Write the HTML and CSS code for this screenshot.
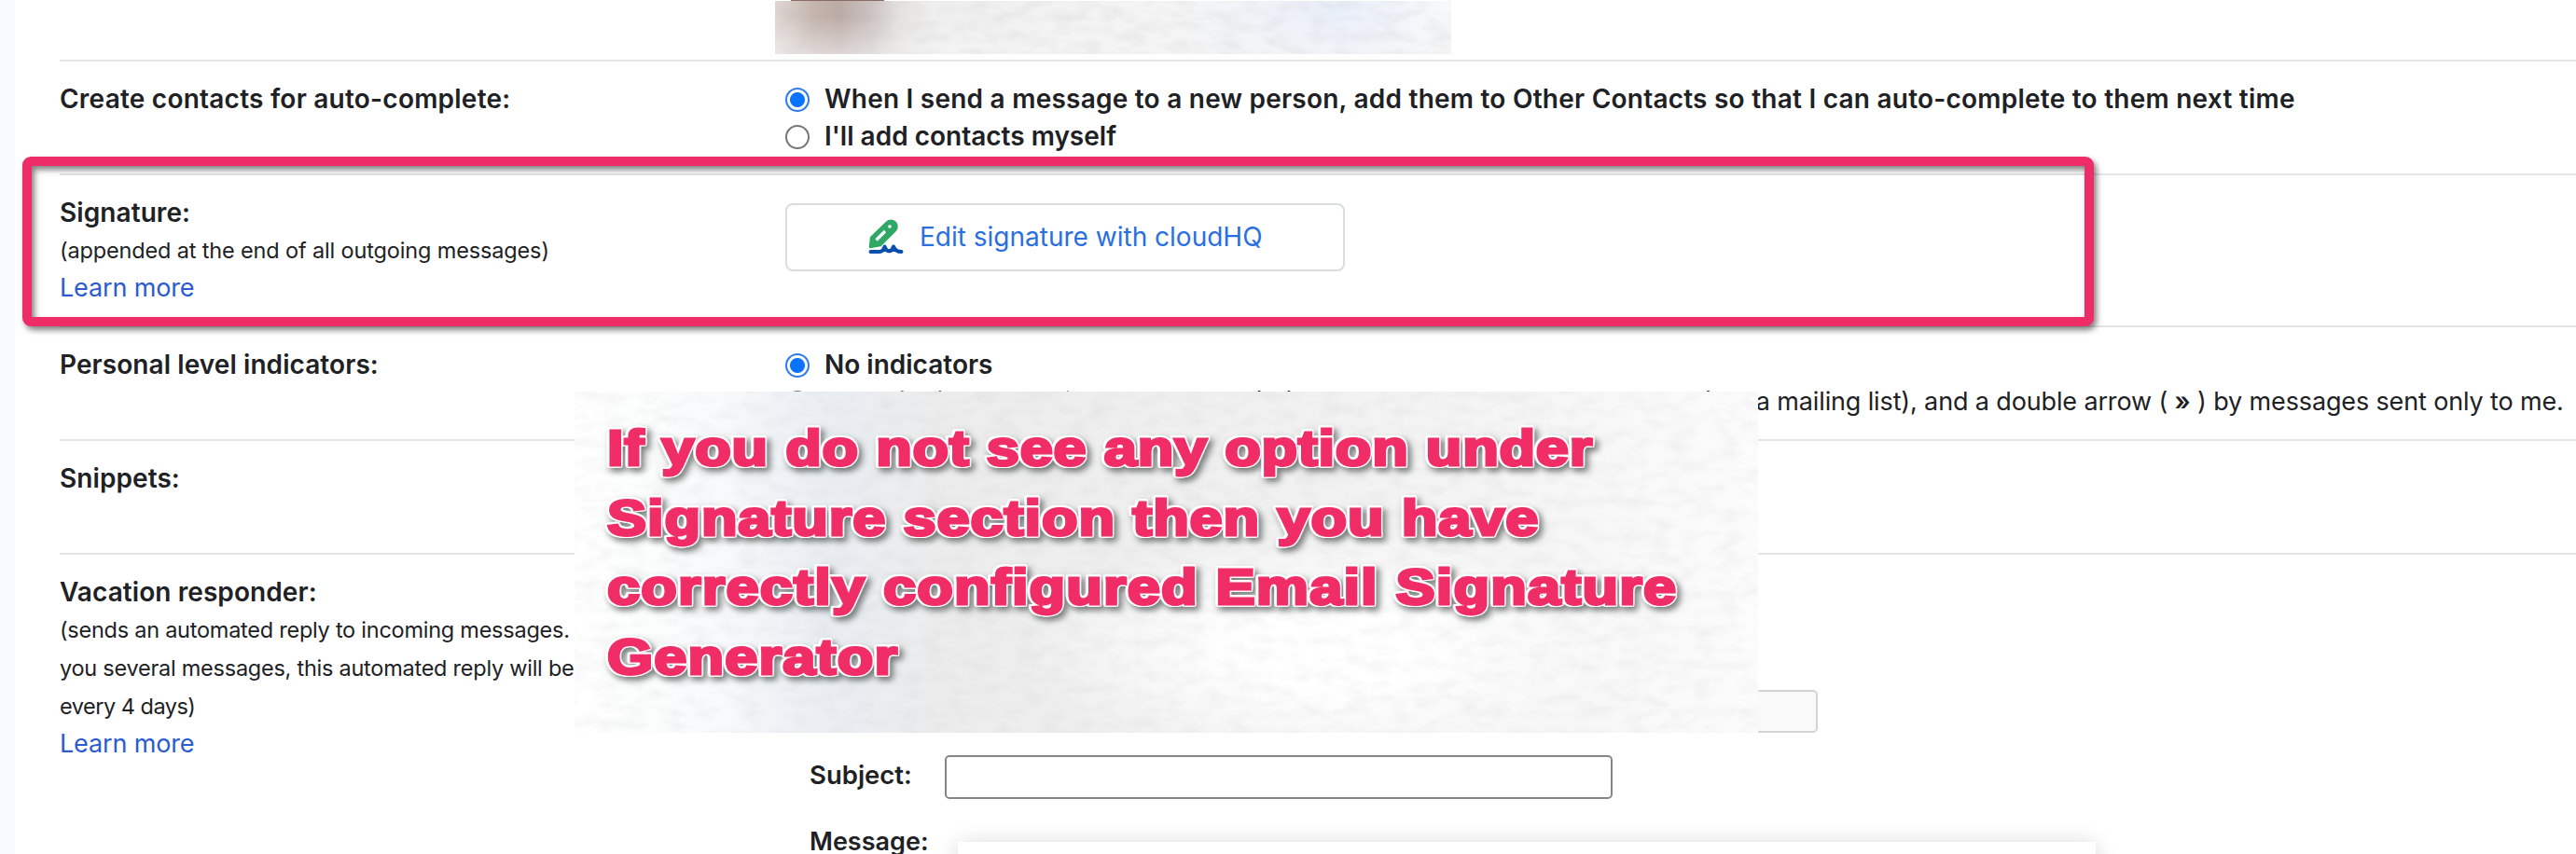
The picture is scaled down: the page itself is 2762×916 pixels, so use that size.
FILE: index.html
```html
<!DOCTYPE html>
<html lang="en"><head><meta charset="utf-8"><title>Settings</title><link rel="stylesheet" href="styles.css"></head>
<body>
<main class="settings">
<section class="row row-top">
  <div class="label"><a class="link">Learn more</a></div>
  <div class="value"><div class="pixelated"><svg class="grain" width="725" height="57"><filter id="g1" x="0" y="0" width="100%" height="100%"><feTurbulence type="fractalNoise" baseFrequency="0.04 0.09" numOctaves="2" seed="3"/><feColorMatrix values="0 0 0 0 .5  0 0 0 0 .5  0 0 0 0 .5  .4 0 0 0 -.15"/></filter><rect width="725" height="57" filter="url(#g1)"/></svg></div></div>
</section>
<section class="row row-contacts">
  <div class="label"><h2 class="name wide">Create contacts for auto-complete:</h2></div>
  <div class="value">
    <label class="option"><i class="radio on"></i><b class="wide">When I send a message to a new person, add them to Other Contacts so that I can auto-complete to them next time</b></label>
    <label class="option"><i class="radio"></i><b>I'll add contacts myself</b></label>
  </div>
</section>
<section class="row row-signature">
  <div class="label"><h2 class="name">Signature:</h2><p class="hint">(appended at the end of all outgoing messages)</p><a class="link">Learn more</a></div>
  <div class="value"><button class="edit"><svg width="38" height="38" viewBox="0 0 38 38" fill="none"><path d="M3 20 L20 3.5 A6.2 6.2 0 0 1 29 12 L13 28 L2 30 Z" fill="#2fa866" stroke="#2fa866" stroke-width="2.5" stroke-linejoin="round"/><path d="M8.5 22.5 L18 13" stroke="#fff" stroke-width="3.4"/><circle cx="23" cy="8" r="1.8" fill="#fff"/><path d="M2.5 35 H12 Q16 35 17.5 29.5 Q20 35 22 34 Q25 35 27 29.5 Q29 35 35.5 35" fill="#0b4fae" stroke="#0b4fae" stroke-width="4" stroke-linecap="round" stroke-linejoin="round"/></svg><span>Edit signature with cloudHQ</span></button></div>
</section>
<section class="row row-level">
  <div class="label"><h2 class="name">Personal level indicators:</h2></div>
  <div class="value">
    <label class="option"><i class="radio on"></i><b>No indicators</b></label>
    <label class="option"><i class="radio"></i><span class="desc"><span class="lead"><b>Show indicators</b> - Display an arrow ( <b>›</b> ) by messages sent to my address (not </span><span class="tail">a mailing list), and a double arrow ( <b>»</b> ) by messages sent only to me.</span></span></label>
  </div>
</section>
<section class="row row-snippets">
  <div class="label"><h2 class="name">Snippets:</h2></div><div class="value"></div>
</section>
<section class="row row-vacation">
  <div class="label"><h2 class="name">Vacation responder:</h2><p class="hint tight">(sends an automated reply to incoming messages.<br>you several messages, this automated reply will be<br><span class="tighter">every 4 days)</span></p><a class="link">Learn more</a></div>
  <div class="value form">
    <div class="dates"><span class="date"></span><span class="date"></span></div>
    <div class="field"><b class="field-name">Subject:</b><input class="subject"></div>
    <div class="field message"><b class="field-name">Message:</b><div class="editor"></div></div>
  </div>
</section>
</main>
<div class="frame"></div>
<aside class="note"><svg class="grain" width="1269" height="366"><filter id="g2" x="0" y="0" width="100%" height="100%"><feTurbulence type="fractalNoise" baseFrequency="0.04 0.08" numOctaves="3" seed="8"/><feColorMatrix values="0 0 0 0 .5  0 0 0 0 .5  0 0 0 0 .5  .3 0 0 0 -.12"/></filter><rect width="1269" height="366" filter="url(#g2)"/></svg>
<p class="note-text"><span class="l1">If you do not see any option under</span><br><span class="l2">Signature section then you have</span><br><span class="l3">correctly configured Email Signature</span><br><span class="l3">Generator</span></p></aside>
</body></html>
```
FILE: styles.css
```css
*{box-sizing:border-box}
body{margin:0;width:2762px;height:916px;overflow:hidden;position:relative;background:#fff;color:#202124;font-family:Inter,"Open Sans",sans-serif;font-size:28px;line-height:40px}
.settings{height:916px;overflow:hidden;border-left:16px solid #f6fafe;padding-left:48px;white-space:nowrap}
.row{display:grid;grid-template-columns:778px 1fr;border-top:2px solid #e4e5e6;padding-top:19.5px}
.row-top{height:64px;border-top:0;padding-top:0}
.row-top .link{margin-top:-29px}
.row-contacts{height:122px}
.row-signature{height:163px}
.row-level{height:122px}
.row-snippets{height:122px}
.row-vacation{height:400px}
.name{margin:0;font-size:28px;font-weight:600;line-height:40px;letter-spacing:.08px}
.wide{letter-spacing:.23px}
.hint{margin:0;font-size:23.5px;line-height:41px;letter-spacing:-.15px}
.tight{letter-spacing:-.25px}
.tighter{letter-spacing:-.5px}
.link{display:block;font-size:27px;letter-spacing:-.15px;color:#2a5bd0;line-height:40px}
.option{display:flex;align-items:center;height:40px;gap:16px}
b{font-weight:600}
.radio{width:26px;height:26px;border:2px solid #767676;border-radius:50%;flex:none;margin-top:3px}
.radio.on{border-color:#2f7be8;background:radial-gradient(circle,#0b74ff 0 7.5px,#fff 8.5px)}
.desc{font-size:27px;white-space:pre}
.lead{letter-spacing:.03px}
.tail{letter-spacing:-.14px}
.pixelated{position:relative;width:725px;height:57px;margin:1px 0 0 -11px;background:linear-gradient(0deg,rgba(245,245,245,.6),rgba(245,245,245,0) 70%),linear-gradient(90deg,#e0d8d4,#c4b3ac 6%,#bcaaa5 9.5%,#cac1bf 14%,#e2e0df 18%,#f0efef 23%,#f5f5f5 60%,#eaf0fb 84%,#f9f9fa)}
.pixelated::before{content:"";position:absolute;left:17px;top:-1px;width:100px;height:1px;background:#8a6c64}
.grain{position:absolute;left:0;top:0}
.edit{display:flex;width:600px;height:73px;margin-top:10px;border:2px solid #dadce0;border-radius:8px;background:#fff;font:inherit;color:#2a6fe0;align-items:center;justify-content:flex-start;padding:0 0 0 87px;gap:17px}
.form{padding-left:26px}
.dates{display:flex;gap:392px;padding-left:149px;margin-top:125px}
.date{width:270px;height:46px;border:2px solid #d4d4d4;border-radius:5px;background:#f9f9f9}
.field{display:flex;align-items:flex-start;margin-top:24px}
.field-name{width:145px;font-size:27.5px;padding-top:1px}
.subject{width:716px;height:47px;border:2px solid #858585;border-radius:5px}
.message .field-name{width:159px;font-size:27px;padding-top:2px}
.editor{width:1220px;height:100px;margin-top:22px;box-shadow:0 2px 22px rgba(0,0,0,.16);background:#fff}
.frame{position:absolute;left:24px;top:168px;width:2221px;height:182px;border:10px solid #ee2d68;border-radius:9px;filter:drop-shadow(3px 4px 3px rgba(0,0,0,.5))}
.note{position:absolute;left:616px;top:420px;width:1269px;height:366px;background:radial-gradient(ellipse 330px 130px at 64% 76%,#fff 30%,rgba(255,255,255,0)),linear-gradient(90deg,#fff,#f9fafb 12%,#e9eef3 21%,#ececed 30%,#f1f1f1 60%,#f5f5f5 80%,#fcfcfc)}
.note-text{position:relative;margin:0 0 0 35px;padding-top:23px;width:1050px;white-space:nowrap;transform:scaleX(1.17);transform-origin:0 0;font-family:"Liberation Sans",Arial,sans-serif;font-weight:700;font-size:54px;line-height:74.7px;color:#f02d66;-webkit-text-stroke:3px #f02d66;filter:drop-shadow(1.4px 0 0 #fff) drop-shadow(-1.4px 0 0 #fff) drop-shadow(0 1.4px 0 #fff) drop-shadow(0 -1.4px 0 #fff) drop-shadow(3px 4px 3px rgba(50,60,55,.65))}
.l1{letter-spacing:.63px}
.l2{letter-spacing:.74px}
.l3{letter-spacing:.98px}
```
